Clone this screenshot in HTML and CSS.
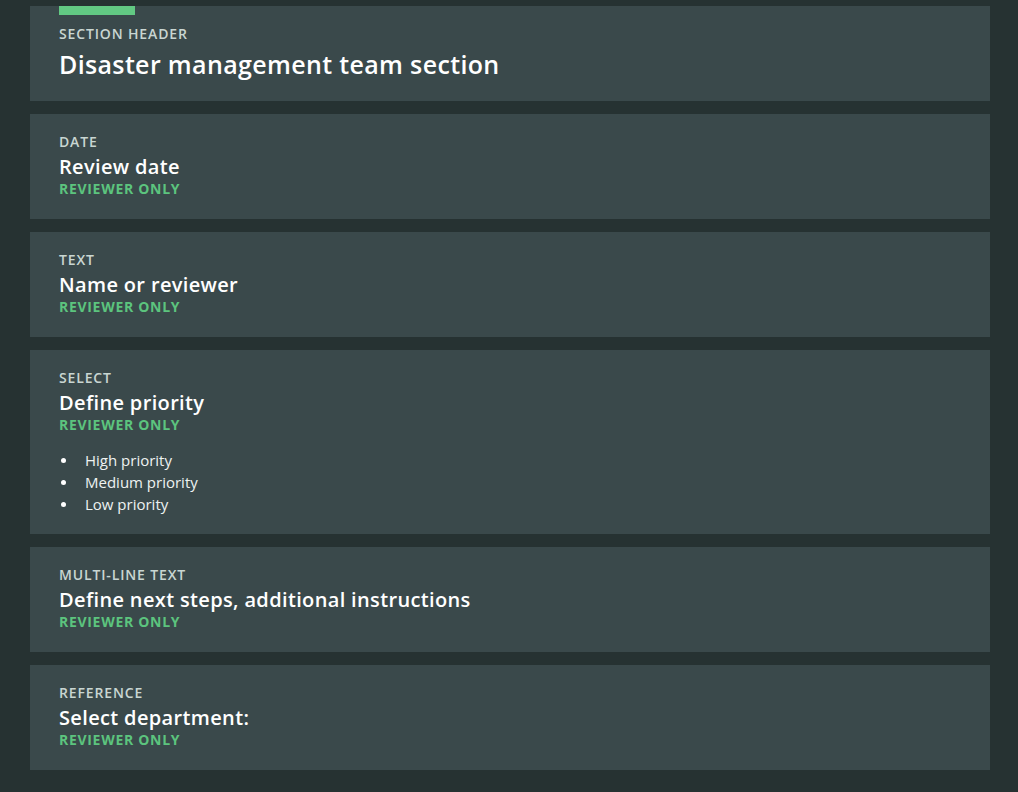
FILE: index.html
```html
<!DOCTYPE html>
<html lang="en">
<head>
    <meta charset="UTF-8">
    <title>Form preview</title>
    <link rel="stylesheet" href="styles.css">
</head>
<body>

    <div id="form">
        <!-- Section header -->
        <div class="card header-card">
            <div class="accent"></div>
            <div class="type">SECTION HEADER</div>
            <div class="title big">Disaster management team section</div>
        </div>

        <div class="card">
            <div class="type">DATE</div>
            <div class="title">Review date</div>
            <div class="tag">REVIEWER ONLY</div>
        </div>

        <div class="card">
            <div class="type">TEXT</div>
            <div class="title">Name or reviewer</div>
            <div class="tag">REVIEWER ONLY</div>
        </div>

        <div class="card list-card">
            <div class="type">SELECT</div>
            <div class="title">Define priority</div>
            <div class="tag">REVIEWER ONLY</div>
            <ul class="options">
                <li>High priority</li>
                <li>Medium priority</li>
                <li>Low priority</li>
            </ul>
        </div>

        <div class="card">
            <div class="type">MULTI-LINE TEXT</div>
            <div class="title">Define next steps, additional instructions</div>
            <div class="tag">REVIEWER ONLY</div>
        </div>

        <div class="card">
            <div class="type">REFERENCE</div>
            <div class="title">Select department:</div>
            <div class="tag">REVIEWER ONLY</div>
        </div>
    </div>

</body>
</html>
```

FILE: styles.css
```css
* {
    margin: 0;
    padding: 0;
    box-sizing: border-box;
}

body {
    background-color: #263232;
    font-family: "Open Sans", "Noto Sans", sans-serif;
    color: #ffffff;
    overflow: hidden;
}

#form {
    display: flex;
    flex-direction: column;
    gap: 13px;
    padding: 6px 28px 0 30px;
}

.card {
    background-color: #3a494b;
    padding: 19px 29px 21px 29px;
}

.header-card {
    padding-top: 0;
    padding-bottom: 21px;
}

.list-card {
    padding-bottom: 19px;
}

.accent {
    width: 76px;
    height: 9px;
    background-color: #62c983;
    margin-bottom: 10px;
}

.type {
    font-size: 14px;
    line-height: 18px;
    font-weight: 600;
    color: #c9d6d2;
    letter-spacing: 0.85px;
}

.title {
    font-size: 20px;
    line-height: 26px;
    font-weight: 600;
    margin-top: 3px;
    letter-spacing: 0.35px;
}

.title.big {
    font-size: 25px;
    line-height: 32px;
    margin-top: 5px;
    letter-spacing: 0.35px;
}

.tag {
    font-size: 14px;
    line-height: 18px;
    font-weight: 700;
    color: #5cc47e;
    letter-spacing: 0.7px;
}

.options {
    list-style: none;
    margin-top: 15px;
}

.options li {
    position: relative;
    font-size: 15px;
    line-height: 22px;
    padding-left: 26px;
    color: #eef2f1;
}

.options li::before {
    content: "";
    position: absolute;
    left: 2px;
    top: 9px;
    width: 5px;
    height: 5px;
    border-radius: 50%;
    background-color: #ffffff;
}
```
